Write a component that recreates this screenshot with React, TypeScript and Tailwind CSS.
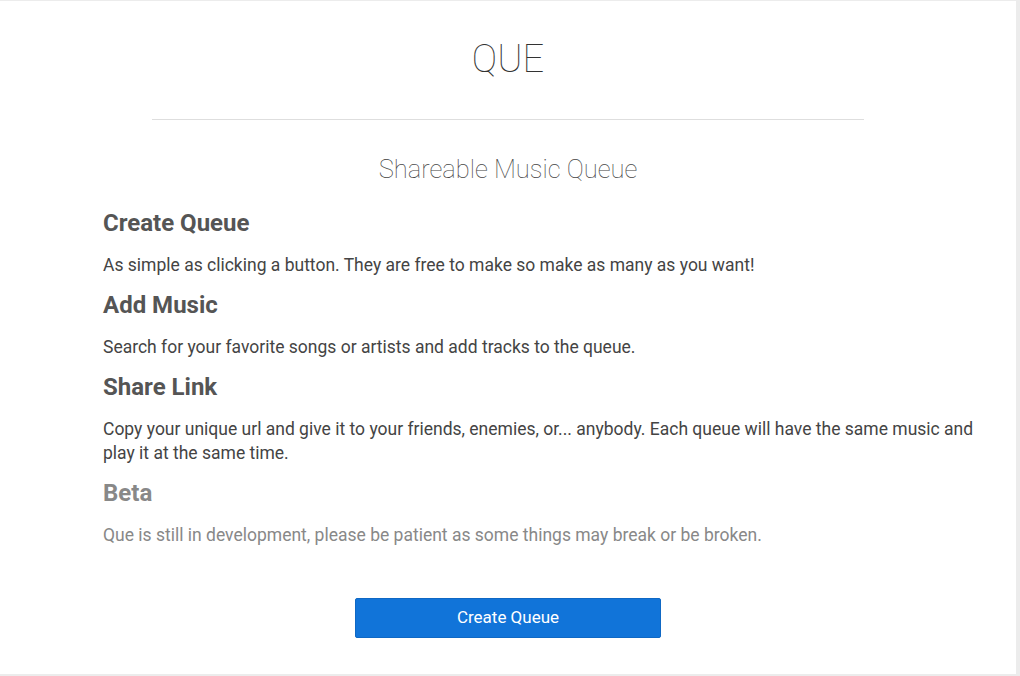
import React from 'react';

const sections = [
  {
    title: 'Create Queue',
    body: 'As simple as clicking a button. They are free to make so make as many as you want!',
    muted: false
  },
  {
    title: 'Add Music',
    body: 'Search for your favorite songs or artists and add tracks to the queue.',
    muted: false
  },
  {
    title: 'Share Link',
    body: 'Copy your unique url and give it to your friends, enemies, or... anybody. Each queue will have the same music and play it at the same time.',
    muted: false
  },
  {
    title: 'Beta',
    body: 'Que is still in development, please be patient as some things may break or be broken.',
    muted: true
  }
];

const App = () => {
  return (
    <div className="min-h-[676px] bg-[#ececec] pt-px font-['Roboto',_'Liberation_Sans',_sans-serif]">
      <div className="w-[1016px] h-[673px] bg-white flex flex-col">
        <h1 className="mt-[38px] h-10 leading-10 text-center text-[38px] font-thin text-[#333]">QUE</h1>
        <hr className="mt-[40px] mx-auto w-[712px] border-0 border-t border-[#dedede]" />
        <h2 className="mt-[31px] h-9 leading-9 text-center text-[25.5px] font-thin text-[#444]">
          Shareable Music Queue
        </h2>
        <div className="mt-[21px] pl-[103px] pr-[18px]">
          {sections.map((s, i) => (
            <div key={i} className={i > 0 ? 'mt-[13px]' : ''}>
              <h3
                className={
                  'h-[30px] leading-[30px] text-[24px] font-bold ' +
                  (s.muted ? 'text-[#888]' : 'text-[#555]')
                }
              >
                {s.title}
              </h3>
              <p
                className={
                  'mt-[15px] text-[17.5px] leading-6 ' + (s.muted ? 'text-[#888]' : 'text-[#444]')
                }
              >
                {s.body}
              </p>
            </div>
          ))}
        </div>
        <div className="mt-[51px] flex justify-center">
          <button className="w-[306px] h-10 bg-[#1174d9] border border-[#0f68c4] rounded-[2px] text-white text-[17px]">
            Create Queue
          </button>
        </div>
      </div>
    </div>
  );
};

export default App;
